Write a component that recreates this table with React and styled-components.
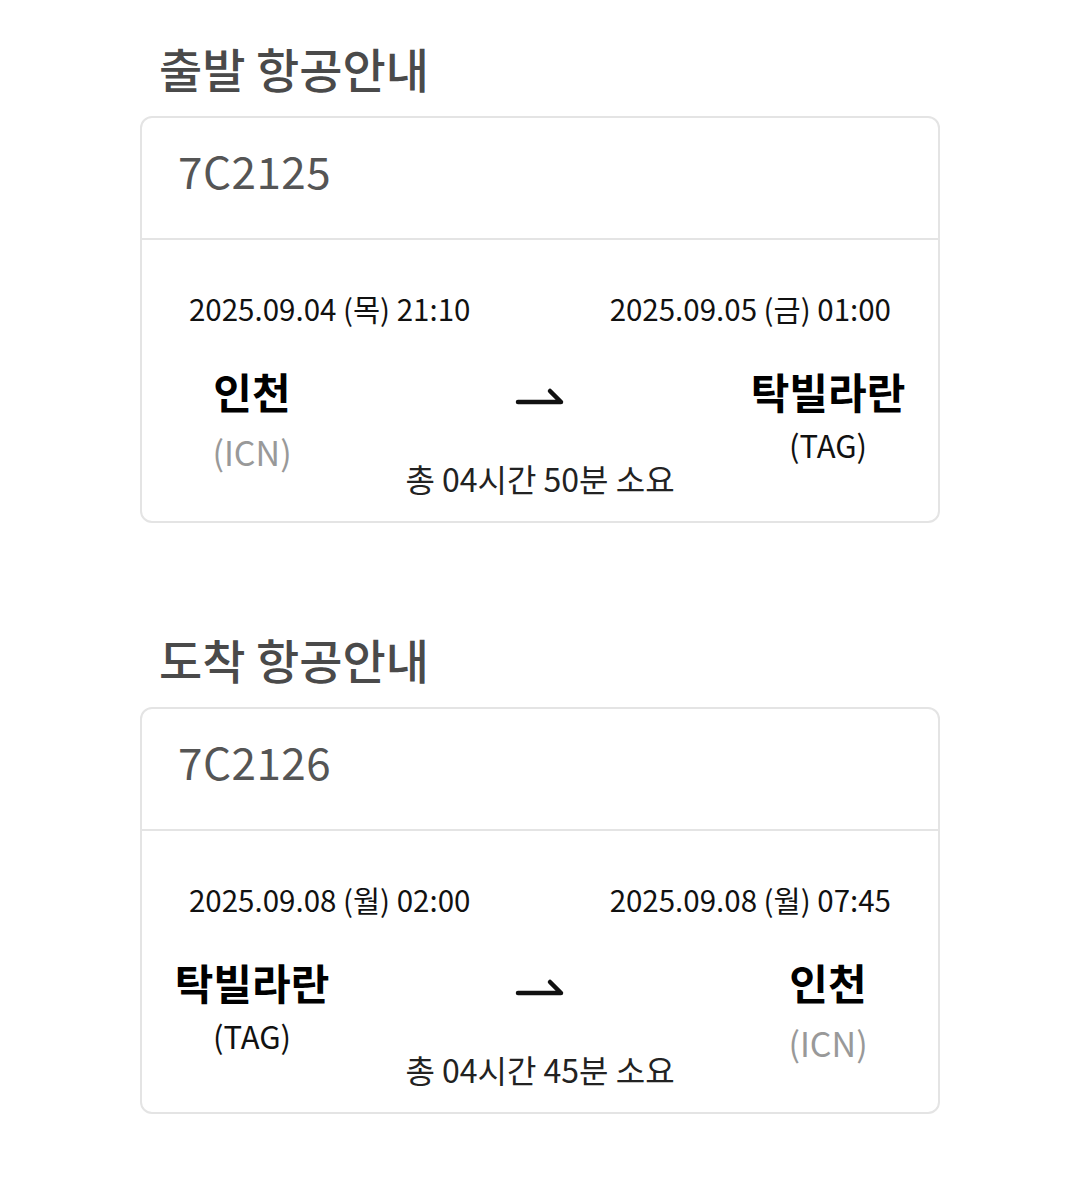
import React from "react";
import styled, { createGlobalStyle } from "styled-components";

const flights = [
  {
    title: "출발 항공안내",
    number: "7C2125",
    departAt: "2025.09.04 (목) 21:10",
    arriveAt: "2025.09.05 (금) 01:00",
    from: { name: "인천", code: "ICN", home: true },
    to: { name: "탁빌라란", code: "TAG", home: false },
    duration: "총 04시간 50분 소요",
  },
  {
    title: "도착 항공안내",
    number: "7C2126",
    departAt: "2025.09.08 (월) 02:00",
    arriveAt: "2025.09.08 (월) 07:45",
    from: { name: "탁빌라란", code: "TAG", home: false },
    to: { name: "인천", code: "ICN", home: true },
    duration: "총 04시간 45분 소요",
  },
];

// 오른쪽 화살표 (윗쪽 갈고리)
function RouteArrow() {
  return (
    <svg width="52" height="24" viewBox="0 0 52 24" fill="none">
      <path
        d="M4 15 H47 L36 4"
        stroke="#111"
        strokeWidth="4.5"
        strokeLinecap="round"
        strokeLinejoin="round"
      />
    </svg>
  );
}

function Airport({ airport }) {
  return (
    <StAirport>
      <StCity>{airport.name}</StCity>
      <StCode $muted={airport.home}>({airport.code})</StCode>
    </StAirport>
  );
}

function FlightCard({ flight }) {
  return (
    <StSection>
      <StTitle>{flight.title}</StTitle>
      <StCard>
        <StCardHeader>{flight.number}</StCardHeader>
        <StCardBody>
          <StDateRow>
            <span>{flight.departAt}</span>
            <span>{flight.arriveAt}</span>
          </StDateRow>
          <StRoute>
            <Airport airport={flight.from} />
            <StMiddle>
              <StArrowBox>
                <RouteArrow />
              </StArrowBox>
              <StDuration>{flight.duration}</StDuration>
            </StMiddle>
            <Airport airport={flight.to} />
          </StRoute>
        </StCardBody>
      </StCard>
    </StSection>
  );
}

export default function App() {
  return (
    <>
      <GlobalStyle />
      <StPage>
        {flights.map((flight) => (
          <FlightCard key={flight.number} flight={flight} />
        ))}
      </StPage>
    </>
  );
}

const GlobalStyle = createGlobalStyle`
  body {
    margin: 0;
    background: #fff;
    font-family: "Noto Sans CJK KR", "Noto Sans", sans-serif;
  }
`;

const StPage = styled.div`
  width: 800px;
  margin: 0 auto;
  padding-top: 40px;
  display: flex;
  flex-direction: column;
  gap: 108px;
`;

const StSection = styled.section`
  display: flex;
  flex-direction: column;
`;

const StTitle = styled.h2`
  margin: 0 0 20px;
  padding-left: 19px;
  font-size: 47px;
  line-height: 56px;
  font-weight: 500;
  color: #4a4a4a;
`;

const StCard = styled.div`
  border: 2px solid #e4e4e4;
  border-radius: 12px;
  background: #fff;
`;

const StCardHeader = styled.div`
  height: 122px;
  padding: 0 36px 17px;
  box-sizing: border-box;
  display: flex;
  align-items: center;
  border-bottom: 2px solid #e4e4e4;
  font-size: 44px;
  color: #555;
  letter-spacing: 0.5px;
`;

const StCardBody = styled.div`
  padding: 48px 0 23px;
`;

const StDateRow = styled.div`
  display: flex;
  justify-content: space-between;
  padding: 0 47px;
  font-size: 29.5px;
  line-height: 40px;
  color: #111;
`;

const StRoute = styled.div`
  margin-top: 38px;
  display: grid;
  grid-template-columns: 180px 1fr 180px;
  padding: 0 20px;
  align-items: start;
`;

const StAirport = styled.div`
  display: flex;
  flex-direction: column;
  align-items: center;
  white-space: nowrap;
`;

const StCity = styled.div`
  font-size: 42px;
  line-height: 50px;
  font-weight: 700;
  color: #000;
`;

const StCode = styled.div`
  margin-top: ${(p) => (p.$muted ? "16px" : "9px")};
  font-size: ${(p) => (p.$muted ? "34px" : "31px")};
  line-height: 40px;
  color: ${(p) => (p.$muted ? "#999" : "#111")};
`;

const StMiddle = styled.div`
  display: flex;
  flex-direction: column;
  align-items: center;
`;

const StArrowBox = styled.div`
  margin-top: 21px;
  height: 24px;
  display: flex;
`;

const StDuration = styled.div`
  margin-top: 47px;
  font-size: 32px;
  line-height: 40px;
  color: #222;
  white-space: nowrap;
`;
